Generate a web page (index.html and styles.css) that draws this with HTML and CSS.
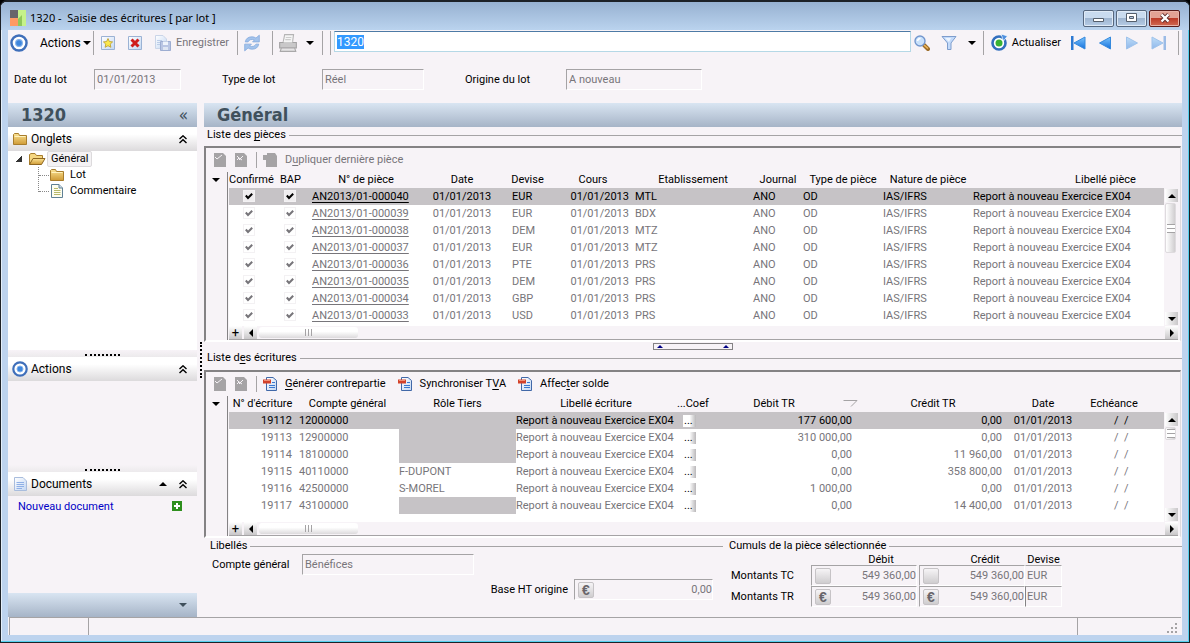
FILE: index.html
```html
<!DOCTYPE html>
<html lang="fr">
<head>
<meta charset="utf-8">
<title>1320 - Saisie des écritures [ par lot ]</title>
<link rel="stylesheet" href="styles.css">
</head>
<body>
<svg class="defs" aria-hidden="true">
  <defs>
    <linearGradient id="blue" x1="0" y1="0" x2="0" y2="1"><stop offset="0" stop-color="#7cc4fb"/><stop offset="1" stop-color="#1470dd"/></linearGradient>
    <linearGradient id="gold" x1="0" y1="0" x2="0" y2="1"><stop offset="0" stop-color="#fbe394"/><stop offset="1" stop-color="#cf9a35"/></linearGradient>
    <linearGradient id="paper" x1="0" y1="0" x2="1" y2="1"><stop offset="0" stop-color="#ffffff"/><stop offset="1" stop-color="#c3d7f3"/></linearGradient>
    <symbol id="target" viewBox="0 0 16 16"><circle cx="8" cy="8" r="6.7" fill="#fff" stroke="#3f6fba" stroke-width="2.2"/><circle cx="8" cy="8" r="3" fill="#3d86dd" stroke="#85b2ea"/></symbol>
    <symbol id="page" viewBox="0 0 16 16"><path d="M2.500 1.500H11L14.500 5V14.500H2.500Z" fill="url(#paper)" stroke="#a9bddd"/><path d="M4.500 6.500H12M4.500 8.500H12M4.500 10.500H12M4.500 12.500H10" stroke="#8fb0e6"/></symbol>
    <symbol id="note" viewBox="0 0 16 16"><path d="M2.500 1.500H10L13.500 5V14.500H2.500Z" fill="#fdfdf0" stroke="#5f8095"/><path d="M10 1.500V5H13.500" fill="#cddbe8" stroke="#5f8095"/><path d="M5 5.500H9M5 7.500H11.500M5 9.500H11.500M5 11.500H11.500" stroke="#b7b96a"/></symbol>
    <symbol id="folder" viewBox="0 0 16 16"><path d="M1.500 3.500V13.500H14.500V4.500H7.500L6.500 2.500H2.500Z" fill="url(#gold)" stroke="#a87d2c"/><path d="M2.500 5.500H13.500" stroke="#fff2bd"/></symbol>
    <symbol id="open" viewBox="0 0 18 16"><path d="M1.500 13.500V3.500L3 2.500H7L8.500 4.500H14.500V7.500" fill="#f5d781" stroke="#a87d2c"/><path d="M1.500 13.500L5 7.500H17L13.500 13.500Z" fill="url(#gold)" stroke="#8f6720"/></symbol>
    <symbol id="star" viewBox="0 0 16 16"><path d="M1.500 1.500H14.500V14.500H1.500Z" fill="url(#paper)" stroke="#9bb2d4"/><path d="M8 3.500L9.400 6.500L12.600 6.900L10.200 9.100L10.900 12.300L8 10.700L5.100 12.300L5.800 9.100L3.400 6.900L6.600 6.500Z" fill="#fbe84c" stroke="#b99a29" stroke-width=".8"/></symbol>
    <symbol id="cross" viewBox="0 0 16 16"><path d="M1.500 1.500H14.500V14.500H1.500Z" fill="url(#paper)" stroke="#9bb2d4"/><path d="M4.500 4.500L11.500 11.500M11.500 4.500L4.500 11.500" stroke="#cf1c1c" stroke-width="3"/></symbol>
    <symbol id="save" viewBox="0 0 18 18"><path d="M1.500 1.500H9L12.500 5V14.500H1.500Z" fill="url(#paper)" stroke="#cad5e8"/><path d="M3 6.500H8M3 8.500H6M3 10.500H6" stroke="#bccde8"/><path d="M6.500 7.500H16.500V16.500H6.500Z" fill="#b9c5e3" stroke="#9dadd1"/><path d="M9 7.500H14V11H9Z" fill="#eef3fb"/><path d="M9 13H14V16H9Z" fill="#dfe6f3"/></symbol>
    <symbol id="sync" viewBox="0 0 16 16"><path d="M2 7Q3 2.500 8 2.500Q10 2.500 11.500 3.600L14.500 1V7H8.500L10.200 5.200Q6 4 4.500 7Z" fill="#a3c3ec" stroke="#84a9dc" stroke-width=".7"/><path d="M14 9Q13 13.500 8 13.500Q6 13.500 4.500 12.400L1.500 15V9H7.500L5.800 10.800Q10 12 11.500 9Z" fill="#a3c3ec" stroke="#84a9dc" stroke-width=".7"/></symbol>
    <symbol id="printer" viewBox="0 0 18 18"><path d="M4.500 9L6 1.500H14L13 9Z" fill="#f5f5f5" stroke="#b5b4b5"/><path d="M1.500 8.500H16.500V13.500H1.500Z" fill="#c9c8c9" stroke="#a3a2a3"/><path d="M5 8.500L5.500 6H12.500L13 8.500Z" fill="#f5f5f5"/><path d="M3 13.500H15L16 16.500H2Z" fill="#e6e5e6" stroke="#a9a8a9"/><path d="M7 4H12M6.500 6H11.500" stroke="#ccc"/></symbol>
    <symbol id="loupe" viewBox="0 0 16 16"><path d="M10 10L14 14" stroke="#9c6b26" stroke-width="4" stroke-linecap="round"/><path d="M10 10L14 13.500" stroke="#f0ba5d" stroke-width="1.600"/><circle cx="6" cy="6" r="5" fill="#c9e1fb" stroke="#7397ce" stroke-width="1.400"/><path d="M3.500 6Q4 3.500 6.500 3.500" fill="none" stroke="#fff" stroke-width="1.500"/></symbol>
    <symbol id="funnel" viewBox="0 0 16 16"><path d="M1 1.500H15L10 8V14.500H6.500V8Z" fill="#c3dafa" stroke="#7e9dcd"/><path d="M4 3H10L8 7" fill="#edf5ff"/></symbol>
    <symbol id="refresh" viewBox="0 0 18 18"><circle cx="9" cy="9" r="6.500" fill="#fff" stroke="#326fbe" stroke-width="2.600"/><path d="M11 0L17.500 2L13.500 7Z" fill="#4d8fdf" stroke="#fff" stroke-width=".7"/><circle cx="9" cy="9" r="3.500" fill="#39b234"/></symbol>
    <symbol id="first" viewBox="0 0 16 16"><path d="M1 1H3.500V15H1Z" fill="#2c79d2"/><path d="M15 2V14L4 8Z" fill="url(#blue)" stroke="#3589dd"/></symbol>
    <symbol id="prev" viewBox="0 0 16 16"><path d="M13.500 2V14L2.500 8Z" fill="url(#blue)" stroke="#3589dd"/></symbol>
    <symbol id="entry" viewBox="0 0 16 16"><path d="M4.500 1.500H11L14.500 4.500V14.500H4.500Z" fill="url(#paper)" stroke="#4168a8"/><path d="M1 3.500H9V7.500H1Z" fill="#d3422a"/><path d="M2 4.500H8" stroke="#f08f74"/><path d="M10 6.500H13M7 9.500H13M7 11.500H13" stroke="#3b78cf"/></symbol>
    <symbol id="edit" viewBox="0 0 14 16"><path d="M1 1H10L13 4V15H1Z" fill="#a5a3a5"/><path d="M2 5L4 7L9 3" fill="none" stroke="#f7f3f7"/></symbol>
    <symbol id="drop" viewBox="0 0 14 16"><path d="M1 1H10L13 4V15H1Z" fill="#a5a3a5"/><path d="M3 4L5 6L3 8M9 4L5 8M5 6L8 8" fill="none" stroke="#f7f3f7"/></symbol>
    <symbol id="copy" viewBox="0 0 16 16"><path d="M5 1H13L15 4V15H4V8H1V3H5Z" fill="#a5a3a5"/></symbol>
    <symbol id="collapse" viewBox="0 0 8 9"><path d="M.5 4L4 .8L7.500 4M.5 8L4 4.800L7.500 8" fill="none" stroke="#000" stroke-width="1.400"/></symbol>
    <symbol id="tick" viewBox="0 0 8 8"><path d="M.8 3.500L3 6L7.200 1.700" fill="none" stroke="currentColor" stroke-width="2"/></symbol>
  </defs>
</svg>
<div class="window">
  <header class="titlebar">
    <svg class="logo" viewBox="0 0 16 16"><path d="M0 0H8V8H0Z" fill="#68656a"/><path d="M0 8H8V16H0Z" fill="#ff9a63"/><path d="M8 0H16V16H8Z" fill="#c5f289"/><path d="M8 16V9L12 5V16Z" fill="#8fc75a"/></svg>
    <h1>1320 -&nbsp; Saisie des écritures [ par lot ]</h1>
    <button class="win" aria-label="Réduire"><svg viewBox="0 0 12 10"><path d="M.5 5.500H10.500V8.500H.5Z" fill="#fff" stroke="#555f6c"/></svg></button>
    <button class="win" aria-label="Agrandir"><svg viewBox="0 0 12 10"><path d="M.5 .5H10.500V8.500H.5Z" fill="#fff" stroke="#555f6c"/><path d="M3.500 3.500H7.500V5.500H3.500Z" fill="#b7cbe3" stroke="#555f6c"/></svg></button>
    <button class="win close" aria-label="Fermer"><svg viewBox="0 0 12 10"><path d="M2.500 1.500L9.500 8.500M9.500 1.500L2.500 8.500" stroke="#5d2a2a" stroke-width="4"/><path d="M2.500 1.500L9.500 8.500M9.500 1.500L2.500 8.500" stroke="#fff" stroke-width="2.400"/></svg></button>
  </header>

  <div class="client">
    <nav class="toolbar">
      <button class="tool actions"><svg class="i18"><use href="#target"/></svg><span>Actions</span><i class="down"></i></button>
      <div class="tools bar">
        <button class="tool" aria-label="Nouveau"><svg class="i16"><use href="#star"/></svg></button>
        <button class="tool" aria-label="Supprimer"><svg class="i16"><use href="#cross"/></svg></button>
        <button class="tool off"><svg class="i18"><use href="#save"/></svg><span>Enregistrer</span></button>
      </div>
      <div class="tools bar sync"><button class="tool" aria-label="Synchroniser"><svg class="i18"><use href="#sync"/></svg></button></div>
      <div class="tools bar print"><button class="tool" aria-label="Imprimer"><svg class="i20"><use href="#printer"/></svg><i class="down"></i></button></div>
      <div class="bar stop"></div>
      <div class="search bar"><input aria-label="Lot" value="1320" id="lot"></div>
      <div class="tools find">
        <button class="tool" aria-label="Rechercher"><svg class="i16"><use href="#loupe"/></svg></button>
        <button class="tool filter" aria-label="Filtrer"><svg class="i16"><use href="#funnel"/></svg><i class="down"></i></button>
      </div>
      <div class="tools bar moves">
        <button class="tool refresh"><svg class="i18"><use href="#refresh"/></svg><span>Actualiser</span></button>
        <button class="tool" aria-label="Premier"><svg class="i16"><use href="#first"/></svg></button>
        <button class="tool" aria-label="Précédent"><svg class="i16"><use href="#prev"/></svg></button>
        <button class="tool pale flip" aria-label="Suivant"><svg class="i16"><use href="#prev"/></svg></button>
        <button class="tool pale flip" aria-label="Dernier"><svg class="i16"><use href="#first"/></svg></button>
      </div>
      <div class="bar end"></div>
    </nav>

    <form class="lot">
      <label for="d">Date du lot</label><input id="d" class="field" value="01/01/2013" readonly>
      <label for="t">Type de lot</label><input id="t" class="field" value="Réel" readonly>
      <label for="o">Origine du lot</label><input id="o" class="field" value="A nouveau" readonly>
    </form>

    <div class="main">
      <aside class="side">
        <h2 class="band">1320<span>«</span></h2>
        <h3 class="section"><svg class="i16"><use href="#folder"/></svg>Onglets<svg class="fold"><use href="#collapse"/></svg></h3>
        <ul class="tree">
          <li><i class="expanded"></i><svg class="i18"><use href="#open"/></svg><span class="current">Général</span>
            <ul>
              <li><svg class="i16"><use href="#folder"/></svg><span>Lot</span></li>
              <li><svg class="i16"><use href="#note"/></svg><span>Commentaire</span></li>
            </ul>
          </li>
        </ul>
        <div class="grip"></div>
        <h3 class="section"><svg class="i16"><use href="#target"/></svg>Actions<svg class="fold"><use href="#collapse"/></svg></h3>
        <div class="empty"></div>
        <div class="grip"></div>
        <h3 class="section"><svg class="i16"><use href="#page"/></svg>Documents<i class="up"></i><svg class="fold next"><use href="#collapse"/></svg></h3>
        <div class="docs"><a href="#">Nouveau document</a><button class="add" aria-label="Ajouter"><svg viewBox="0 0 10 10"><path d="M0 0H10V10H0Z" fill="#2f8f1e"/><path d="M5 2V8M2 5H8" stroke="#fff" stroke-width="2"/></svg></button></div>
        <div class="band foot"><i class="down"></i></div>
      </aside>
      <div class="vgrip"></div>

      <main class="content">
        <h2 class="band">Général</h2>
        <h3 class="legend"><span>Liste des <u>p</u>ièces</span></h3>
        <section class="box grow">
          <div class="boxbar">
            <button class="tool" aria-label="Modifier"><svg class="i14"><use href="#edit"/></svg></button>
            <button class="tool" aria-label="Supprimer la ligne"><svg class="i14"><use href="#drop"/></svg></button>
            <button class="tool off first"><svg class="i16"><use href="#copy"/></svg><span>D<u>u</u>pliquer dernière pièce</span></button>
          </div>
          <div class="list">
            <div class="gutter"><i class="down"></i></div>
            <div class="sheet">
              <table class="pieces">
                <colgroup><col class="w42"><col class="w39"><col class="w112"><col class="w80"><col class="w51"><col class="w80"><col class="w120"><col class="w50"><col class="w80"><col class="w90"><col></colgroup>
                <thead><tr><th>Confirmé</th><th>BAP</th><th>N° de pièce</th><th>Date</th><th>Devise</th><th>Cours</th><th>Etablissement</th><th>Journal</th><th>Type de pièce</th><th>Nature de pièce</th><th class="wide">Libellé pièce</th></tr></thead>
                <tbody id="pieces"></tbody>
              </table>
            </div>
            <div class="vscroll tall"><button aria-label="Haut"><i class="up"></i></button><div class="vthumb"></div><button aria-label="Bas"><i class="down"></i></button></div>
            <div class="hscroll"><button aria-label="Ajouter une ligne">+</button><button aria-label="Gauche"><i class="left"></i></button><div class="hthumb"></div><button class="last" aria-label="Droite"><i class="right"></i></button></div>
          </div>
        </section>
        <div class="hgrip"><div><i class="up"></i><i class="up"></i></div></div>
        <h3 class="legend"><span>Liste d<u>e</u>s écritures</span></h3>
        <section class="box">
          <div class="boxbar">
            <button class="tool" aria-label="Modifier"><svg class="i14"><use href="#edit"/></svg></button>
            <button class="tool" aria-label="Supprimer la ligne"><svg class="i14"><use href="#drop"/></svg></button>
            <button class="tool first"><svg class="i16"><use href="#entry"/></svg><span><u>G</u>énérer contrepartie</span></button>
            <button class="tool cmd"><svg class="i16"><use href="#entry"/></svg><span>Synchroniser T<u>V</u>A</span></button>
            <button class="tool cmd"><svg class="i16"><use href="#entry"/></svg><span>Affec<u>t</u>er solde</span></button>
          </div>
          <div class="list">
            <div class="gutter"><i class="down"></i></div>
            <div class="sheet spare">
              <table class="entries">
                <colgroup><col class="w67"><col class="w103"><col class="w117"><col class="w160"><col class="w35"><col class="w147"><col class="w150"><col class="w70"><col class="w72"><col></colgroup>
                <thead><tr><th>N° d'écriture</th><th>Compte général</th><th>Rôle Tiers</th><th>Libellé écriture</th><th class="coef">...Coef</th><th class="sorted">Débit TR<svg viewBox="0 0 15 7"><path d="M.5 .5H14L8 6.500" fill="none" stroke="#a5a3a5"/></svg></th><th>Crédit TR</th><th>Date</th><th>Echéance</th><th></th></tr></thead>
                <tbody id="entries"></tbody>
              </table>
            </div>
            <div class="vscroll"><button aria-label="Haut"><i class="up"></i></button><div class="vthumb"></div><button aria-label="Bas"><i class="down"></i></button></div>
            <div class="hscroll"><button aria-label="Ajouter une ligne">+</button><button aria-label="Gauche"><i class="left"></i></button><div class="hthumb"></div><button class="last" aria-label="Droite"><i class="right"></i></button></div>
          </div>
        </section>

        <div class="details">
          <section class="labels">
            <h3 class="legend"><span>Libellés</span></h3>
            <div class="account"><label for="cg">Compte général</label><input id="cg" class="field" value="Bénéfices" readonly></div>
            <div class="base"><label for="bh">Base HT origine</label><div class="money"><button aria-label="Devise">€</button><input id="bh" value="0,00" readonly></div></div>
          </section>
          <section class="totals">
            <h3 class="legend"><span>Cumuls de la pièce sélectionnée</span></h3>
            <table class="sums">
              <thead><tr><th></th><th>Débit</th><th>Crédit</th><th>Devise</th></tr></thead>
              <tbody>
                <tr><th>Montants TC</th><td><div class="money"><button aria-label="Devise"></button><input aria-label="Débit TC" value="549 360,00" readonly></div></td><td><div class="money"><button aria-label="Devise"></button><input aria-label="Crédit TC" value="549 360,00" readonly></div></td><td><input class="cur" aria-label="Devise TC" value="EUR" readonly></td></tr>
                <tr><th>Montants TR</th><td><div class="money"><button aria-label="Devise">€</button><input aria-label="Débit TR" value="549 360,00" readonly></div></td><td><div class="money"><button aria-label="Devise">€</button><input aria-label="Crédit TR" value="549 360,00" readonly></div></td><td><input class="cur line" aria-label="Devise TR" value="EUR" readonly></td></tr>
              </tbody>
            </table>
          </section>
        </div>
      </main>
    </div>
    <footer class="status"><div></div><div></div><div><svg viewBox="0 0 12 12"><path d="M8 0H10V2H8ZM4 4H6V6H4ZM8 4H10V6H8ZM0 8H2V10H0ZM4 8H6V10H4ZM8 8H10V10H8Z" fill="#a5a3a5"/></svg></div></footer>
  </div>
</div>
<script src="data.js"></script>
</body>
</html>
```
FILE: data.js
```js
const pieces = [
  ["040", "EUR", "MTL"], ["039", "EUR", "BDX"], ["038", "DEM", "MTZ"], ["037", "EUR", "MTZ"],
  ["036", "PTE", "PRS"], ["035", "DEM", "PRS"], ["034", "GBP", "PRS"], ["033", "USD", "PRS"]
];
const tick = '<td class="check"><span><svg><use href="#tick"/></svg></span></td>';
document.getElementById("pieces").innerHTML = pieces.map(([n, cur, site], i) =>
  `<tr${i ? "" : ' class="sel"'}>${tick}${tick}<td><a href="#">AN2013/01-000${n}</a></td><td class="mid">01/01/2013</td><td class="dev">${cur}</td><td class="num">01/01/2013</td><td>${site}</td><td class="flush">ANO</td><td class="flush">OD</td><td class="flush">IAS/IFRS</td><td class="flush">Report à nouveau Exercice EX04</td></tr>`).join("");

const entries = [
  ["19112", "12000000", null, "177 600,00", "0,00"],
  ["19113", "12900000", null, "310 000,00", "0,00"],
  ["19114", "18100000", null, "0,00", "11 960,00"],
  ["19115", "40110000", "F-DUPONT", "0,00", "358 800,00"],
  ["19116", "42500000", "S-MOREL", "1 000,00", "0,00"],
  ["19117", "43100000", null, "0,00", "14 400,00"]
];
document.getElementById("entries").innerHTML = entries.map(([n, acc, role, deb, cre], i) =>
  `<tr${i ? "" : ' class="sel"'}><td class="num">${n}</td><td class="acc">${acc}</td><td class="${role ? "flush" : "blocked"}">${role || ""}</td><td class="desc"><div>Report à nouveau Exercice EX04</div></td><td class="more"><button aria-label="Coefficient">...</button></td><td class="num amount">${deb}</td><td class="num amount">${cre}</td><td class="mid">01/01/2013</td><td class="due">/&nbsp; /</td><td></td></tr>`).join("");

const lot = document.getElementById("lot");
lot.focus();
lot.select();
```
FILE: styles.css
```css
* { box-sizing: border-box; }
body { margin: 0; font: 11px/16px Roboto, "Liberation Sans", sans-serif; color: #000; background: #000; }
button, input { font: inherit; color: inherit; margin: 0; padding: 0; border: 0; background: none; border-radius: 0; outline: none; }
h1, h2, h3, ul { margin: 0; padding: 0; font-weight: normal; font-size: inherit; list-style: none; }
svg { display: block; flex: none; }
u { text-underline-offset: 2px; }
.defs { position: absolute; width: 0; height: 0; }
.i14 { width: 14px; height: 16px; }
.i16 { width: 16px; height: 16px; }
.i18 { width: 18px; height: 18px; }
.i20 { width: 20px; height: 20px; }

.up, .down, .left, .right { display: block; flex: none; width: 0; height: 0; border: 4px solid transparent; }
.down { border-top-color: #000; border-bottom: 0; }
.up { border-bottom-color: #000; border-top: 0; }
.left { border-right-color: #000; border-left: 0; }
.right { border-left-color: #000; border-right: 0; }

.window { height: 100vh; display: flex; flex-direction: column; border: solid #1d2127; border-width: 2px 1px 1px; border-radius: 7px 7px 0 0; padding: 0 6px 7px; background: #bdd3ee; box-shadow: inset -1px -1px #55d0ee, inset 1px 0 #e4effa; overflow: hidden; }
.titlebar { display: flex; align-items: center; height: 28px; flex: none; margin: 0 -6px; padding: 4px 9px 0; background: linear-gradient(#97b1d1, #bad3ee); }
.titlebar h1 { flex: 1; font: 11px/16px "Noto Sans", sans-serif; white-space: pre; margin-left: 4px; }
.logo { width: 16px; height: 16px; }
.win { width: 31px; height: 17px; margin-left: 2px; border: 1px solid #56677e; border-radius: 2px; background: linear-gradient(#c9dbef 45%, #9eb5d0 50%, #b6cce6); box-shadow: inset 0 0 0 1px #dfeaf6; display: flex; align-items: center; justify-content: center; }
.win svg { width: 12px; height: 10px; }
.close { background: linear-gradient(#e3a294 45%, #bd3c28 50%, #d06a53); border-color: #5a1c1a; box-shadow: inset 0 0 0 1px #e9b3a8; }

.client { flex: 1; min-height: 0; display: flex; flex-direction: column; background: #f7f3f7; margin: 0 1px; }
.toolbar { display: flex; height: 26px; flex: none; padding: 1px 0; align-items: center; }
.tool { display: flex; align-items: center; flex: none; white-space: nowrap; }
.tools { display: flex; align-items: center; height: 24px; flex: none; }
.bar { border-left: 1px solid #a5a3a5; }
.off { color: #77757a; }
.actions { padding-left: 2px; width: 85px; font-size: 12px; }
.actions span { margin: 0 2px 0 12px; }
.tools.bar { padding-left: 6px; gap: 11px; }
.off span { margin-left: 4px; }
.tools.bar.sync { margin-left: 8px; width: 35px; }
.print { width: 50px; }
.print .down { margin-left: 8px; }
.tools.print, .tools.bar.sync { padding-left: 5px; }
.stop { height: 24px; width: 8px; }
.search { flex: 1; min-width: 0; align-self: stretch; padding-left: 3px; }
.search input { display: block; width: 100%; height: 21px; background: #fff; border: 1px solid #b5d8e6; border-top-color: #4d7aa5; padding: 0 2px; font-size: 12px; }
.search input::selection { background: #3399ff; color: #fff; }
.find { padding: 0 7px 0 3px; gap: 11px; }
.filter .down { margin-left: 11px; }
.tools.moves { gap: 11px; }
.refresh span { margin: 0 -2px 0 4px; }
.pale { opacity: .45; }
.flip svg { transform: scaleX(-1); }
.end { height: 24px; width: 4px; margin-left: 11px; }

.lot { display: grid; grid-template-columns: 80px 87px 41px 100px 102px 41px 101px 136px; flex: none; height: 47px; align-items: center; padding-left: 6px; }
.lot label { white-space: nowrap; }
.lot label:nth-of-type(2) { grid-column: 4; }
.lot label:nth-of-type(3) { grid-column: 7; }
.field { width: 100%; min-width: 0; height: 21px; border: 1px solid; border-color: #a5a3a5 #fff #fff #a5a3a5; padding-left: 2px; color: #77757a; }

.main { flex: 1; min-height: 0; display: flex; }
.side { width: 189px; flex: none; display: flex; flex-direction: column; }
.band { height: 24px; flex: none; display: flex; align-items: center; padding-left: 13px; font: bold 18px/24px "DejaVu Sans Condensed", "DejaVu Sans", sans-serif; color: #40505c; background: linear-gradient(#d9e5f2, #a6b4c7); }
.band span { margin-left: auto; margin-right: 9px; font-weight: normal; font-size: 17px; }
.foot { justify-content: flex-end; padding-right: 10px; }
.foot .down { border-top-color: #40505c; }
.section { height: 24px; flex: none; display: flex; align-items: center; padding: 0 10px 0 4px; gap: 3px; font-size: 12px; background: linear-gradient(#fff 30%, #dcdadc); }
.fold { width: 8px; height: 9px; margin-left: auto; }
.section .up { margin-left: auto; }
.section .next { margin-left: 9px; }
.tree { flex: 1; min-height: 0; background: #fff; padding-left: 8px; }
.tree li { display: flex; flex-wrap: wrap; align-items: center; height: 16px; }
.tree ul { width: 100%; margin-left: 22px; border-left: 1px dotted #888; height: 25px; }
.tree .i18 { margin-left: 6px; height: 16px; }
.tree ul li::before { content: ""; width: 10px; border-top: 1px dotted #888; }
.tree ul span { margin-left: 5px; }
.expanded { width: 6px; height: 6px; background: linear-gradient(135deg, transparent 50%, #333 50%); }
.current { margin-left: 1px; padding: 0 3px; line-height: 14px; background: #f4f2f4; border: 1px solid #dcdadc; border-radius: 2px; }
.grip { height: 7px; flex: none; background: linear-gradient(#f7f3f7, #eceaec); }
.grip::before { content: ""; display: block; width: 35px; margin: 0 auto; height: 4px; border-bottom: 2px dotted #000; }
.empty { height: 84px; flex: none; }
.docs { height: 97px; flex: none; display: flex; align-items: flex-start; justify-content: space-between; padding: 3px 15px 0 10px; }
.docs a { color: #0000c6; text-decoration: none; }
.add svg { width: 10px; height: 10px; margin-top: 2px; }
.vgrip { width: 7px; flex: none; position: relative; }
.vgrip::before { content: ""; position: absolute; right: 2px; top: 239px; height: 36px; border-left: 2px dotted #000; }

.content { flex: 1; min-width: 0; display: flex; flex-direction: column; }
.legend { display: flex; align-items: center; height: 16px; flex: none; padding-left: 3px; line-height: 14px; }
.legend::after { content: ""; flex: 1; margin-left: 3px; border-top: 1px solid #a5a3a5; }
.box { margin: 3px 1px 0 0; border: solid; border-width: 2px 1px 2px 2px; border-color: #848284 #dedbde #fff #848284; padding-right: 2px; display: flex; flex-direction: column; flex: none; }
.grow { flex: 1 1 auto; min-height: 0; }
.boxbar { display: flex; align-items: center; height: 24px; flex: none; padding-left: 7px; gap: 7px; }
.boxbar .first { border-left: 1px solid #a5a3a5; padding-left: 5px; margin-left: 1px; }
.boxbar .first span, .cmd span { margin-left: 7px; }
.cmd { margin-left: 4px; }
.list { display: grid; grid-template: 1fr 14px / 23px minmax(0, 1fr) 14px; flex: 1; min-height: 0; }
.gutter { grid-row: 1 / 3; border-right: 1px solid #848284; margin-right: 1px; padding: 6px 0 0 6px; }
.sheet { background: #fff; overflow: hidden; padding-bottom: 1px; }
.spare { padding-bottom: 8px; }
.pieces, .entries { width: 100%; table-layout: fixed; border-collapse: collapse; color: #77757a; }
.list th { height: 16px; padding: 0; font-weight: normal; line-height: 16px; color: #000; background: #f7f3f7; white-space: nowrap; }
.list td { height: 17px; padding: 1px 0 0 2px; line-height: 16px; white-space: nowrap; }
.list td.flush { padding-left: 0; }
.sel, .blocked { background: #c6c3c6; }
.sel { color: #000; }
.list a { color: inherit; text-underline-offset: 2px; }
.list td.check { padding: 0 2px 2px 0; }
.check span { display: block; width: 12px; height: 12px; margin: 0 auto; padding: 1px; border: 1px solid #f3f1f3; }
.check svg { width: 8px; height: 8px; }
.sel .check span { background: #efedef; }
.list td.mid { text-align: center; padding-left: 0; }
.list td.dev { padding-left: 10px; }
.list td.num { text-align: right; padding: 1px 4px 0 0; }
.list td.amount { padding-right: 6px; }
.list th.wide { padding-left: 74px; }
.list td.acc { padding-left: 3px; }
.list td.desc { padding: 1px 1px 0 0; }
.desc div { overflow: hidden; }
.list th.coef { text-align: left; padding-left: 1px; }
.list td.more { padding-left: 7px; }
.more button { display: block; width: 13px; height: 12px; line-height: 10px; color: #000; text-align: left; padding-left: 1px; background: linear-gradient(90deg, #fff 50%, #bab8ba); }
.list th.sorted { padding-right: 21px; position: relative; }
.sorted svg { position: absolute; right: 0; top: 4px; width: 15px; height: 7px; }
.list td.due { padding-left: 36px; }
.w35 { width: 35px; } .w39 { width: 39px; } .w42 { width: 42px; } .w50 { width: 50px; } .w51 { width: 51px; }
.w67 { width: 67px; } .w70 { width: 70px; } .w72 { width: 72px; } .w80 { width: 80px; } .w90 { width: 90px; }
.w103 { width: 103px; } .w112 { width: 112px; } .w117 { width: 117px; } .w120 { width: 120px; }
.w147 { width: 147px; } .w150 { width: 150px; } .w160 { width: 160px; }
.vscroll { display: flex; flex-direction: column; padding: 17px 0 1px 1px; }
.vscroll button, .hscroll button { width: 13px; height: 13px; flex: none; display: flex; align-items: center; justify-content: center; background: linear-gradient(90deg, #fff, #c9c7c9); line-height: 12px; }
.vscroll button:last-child { margin-top: auto; }
.vthumb { width: 11px; height: 13px; margin-top: 1px; border: 1px solid #dedbde; border-radius: 2px; background: repeating-linear-gradient(#a5a3a5 0 1px, #fff 1px 4px) center / 8px 9px no-repeat, linear-gradient(90deg, #fff, #d0ced0); }
.tall .vthumb { height: 50px; }
.hscroll { grid-column: 2 / 4; display: flex; align-items: flex-start; border-bottom: 1px solid #a5a3a5; }
.hscroll button { margin-right: 2px; background: linear-gradient(#fff, #c9c7c9); font-size: 13px; }
.hscroll button.last { margin: 0 0 0 auto; }
.hthumb { width: 99px; height: 11px; border-radius: 3px; margin-top: 1px; background: repeating-linear-gradient(90deg, #a5a3a5 0 1px, transparent 1px 3px) center / 7px 7px no-repeat, linear-gradient(#fff 40%, #dcdadc); }
.hgrip { height: 8px; flex: none; display: flex; justify-content: center; align-items: center; }
.hgrip div { width: 80px; height: 7px; border: 1px solid #848284; display: flex; justify-content: space-between; align-items: center; padding: 0 3px; }
.hgrip .up { border-width: 0 3px 3px; border-bottom-color: #000084; }
.hgrip ~ .box { margin-top: 4px; }

.details { display: flex; flex: none; height: 79px; gap: 3px; }
.labels { width: 519px; flex: none; padding-left: 3px; }
.totals { flex: 1; }
.account { display: grid; grid-template-columns: 90px 172px; padding-left: 5px; align-items: center; }
.base { display: flex; justify-content: flex-end; align-items: center; gap: 6px; padding-right: 10px; margin-top: 4px; }
.base .money { width: 139px; }
.money { display: flex; align-items: center; height: 21px; border: 1px solid; border-color: #a5a3a5 #fff #fff #a5a3a5; padding-left: 3px; }
.money button { width: 16px; height: 16px; flex: none; border: 1px solid #c6c3c6; border-radius: 2px; background: linear-gradient(#f6f4f6, #cfcdcf); color: #68656a; font: bold 14px/14px "Liberation Sans", sans-serif; }
.money input, .cur { width: 100%; min-width: 0; text-align: right; color: #77757a; }
.cur { display: block; height: 21px; text-align: left; border: 1px solid; border-color: #a5a3a5 #fff #fff #f7f3f7; padding-left: 1px; }
.line { border-left-color: #848284; }
.sums { border-collapse: collapse; table-layout: fixed; width: 335px; margin-left: 1px; }
.sums th { padding: 0; font-weight: normal; }
.sums td { padding: 0 2px 0 0; }
.sums td:nth-child(n+3) { padding: 0; }
.sums thead th { height: 11px; line-height: 11px; }
.sums thead th:nth-child(1) { width: 84px; }
.sums thead th:nth-child(2) { width: 108px; padding-left: 32px; }
.sums thead th:nth-child(3) { width: 106px; padding-left: 26px; }
.sums tbody th { text-align: left; padding-left: 4px; }

.status { display: flex; flex: none; height: 18px; border-top: 1px solid #a5a3a5; margin: 0 1px; }
.status div { border-left: 1px solid #a5a3a5; }
.status div:nth-child(1) { width: 79px; }
.status div:nth-child(2) { flex: 1; }
.status div:nth-child(3) { width: 104px; display: flex; justify-content: flex-end; align-items: flex-end; padding: 0 2px 0 0; }
.status svg { width: 12px; height: 12px; }
```
